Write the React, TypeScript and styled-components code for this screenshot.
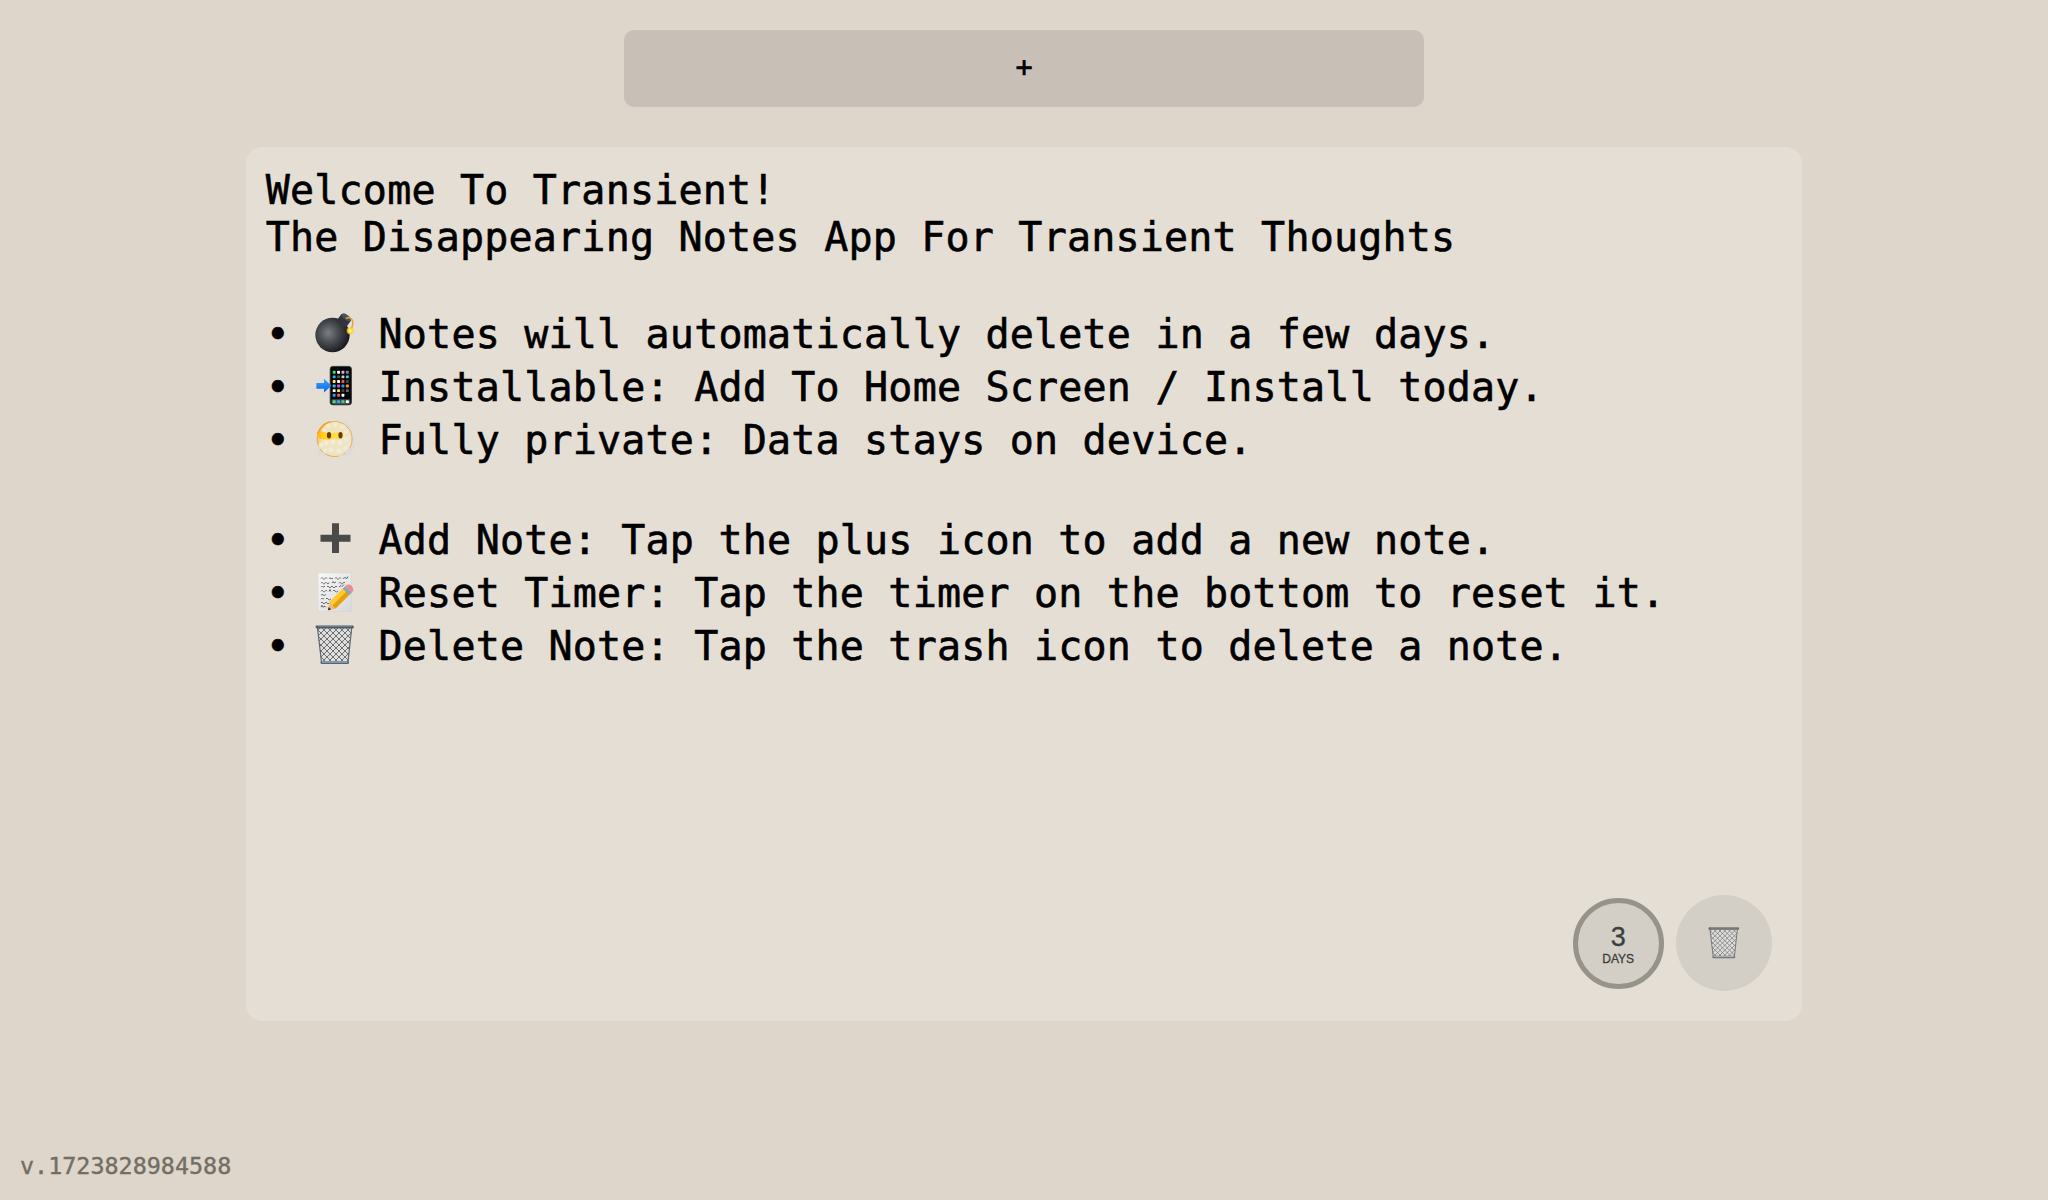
import React from "react";
import styled, { createGlobalStyle } from "styled-components";

const GlobalStyle = createGlobalStyle`
  * { box-sizing: border-box; }
  html, body { margin: 0; background: #ded6ca; }
  body { font-family: "DejaVu Sans Mono", Menlo, monospace; color: #000; }
  button { font: inherit; color: inherit; border: 0; padding: 0; margin: 0; }
`;

const Page = styled.div`
  height: 1200px;
  display: flex;
  flex-direction: column;
  align-items: center;
  padding-top: 30px;
  background: #ded6ca;
`;

const AddButton = styled.button`
  width: 800px;
  height: 77px;
  flex: none;
  border-radius: 10px;
  background: #c8c0b6;
  padding-bottom: 2px;
  font-size: 28.5px;
  line-height: 75px;
  -webkit-text-stroke: 0.6px #000;
`;

const Note = styled.section`
  width: 76%;
  height: 874px;
  flex: none;
  margin-top: 40px;
  padding: 20px 30px 30px 20px;
  border-radius: 16px;
  background: #e5ded4;
  display: flex;
  flex-direction: column;
`;

const NoteText = styled.div`
  flex: 1;
  font-size: 40px;
  letter-spacing: 0.195px;
  white-space: pre;
  -webkit-text-stroke: 0.6px #000;
`;

const Line = styled.div`
  height: 47px;
  line-height: 47px;
`;

const List = styled.ul<{ $gap: number }>`
  list-style: none;
  margin: ${(p) => p.$gap}px 0 0;
  padding: 0;
`;

const Item = styled.li`
  display: flex;
  height: 53px;
  line-height: 53px;
`;

const Bullet = styled.span`
  width: 49.2px;
`;

const Emoji = styled.svg`
  width: 40px;
  height: 40px;
  flex: none;
  margin: 5px 23.6px 0 0;
  overflow: visible;
`;

const Actions = styled.footer`
  display: flex;
  justify-content: flex-end;
  align-items: center;
  gap: 12.5px;
`;

const Timer = styled.button`
  width: 91px;
  height: 91px;
  border: 5px solid #96938b;
  border-radius: 50%;
  background: #d3cec6;
  color: #3b3e3f;
  display: flex;
  flex-direction: column;
  align-items: center;
  font-family: "Liberation Sans", Helvetica, Arial, sans-serif;
  -webkit-text-stroke: 0.3px #3b3e3f;
`;

const Count = styled.span`
  font-size: 27px;
  line-height: 30px;
  margin-top: 19px;
`;

const Unit = styled.span`
  font-size: 12px;
  line-height: 14px;
`;

const Trash = styled.button`
  width: 96px;
  height: 96px;
  border-radius: 50%;
  background: #d3cec6;
  display: flex;
  align-items: center;
  justify-content: center;
`;

const TrashIcon = styled.svg`
  width: 32px;
  height: 32px;
  margin-bottom: 1px;
  filter: grayscale(0.7);
  opacity: 0.85;
`;

const Version = styled.div`
  align-self: flex-start;
  margin: 131px 0 0 20px;
  font-size: 23.4px;
  line-height: 28px;
  color: #736e65;
  -webkit-text-stroke: 0.4px #736e65;
`;

const Bomb = () => (
  <>
    <defs>
      <radialGradient id="bomb" cx="0.38" cy="0.44" r="0.6">
        <stop offset="0" stopColor="#7c8084" />
        <stop offset="0.45" stopColor="#4b4f54" />
        <stop offset="1" stopColor="#191b20" />
      </radialGradient>
      <radialGradient id="spark">
        <stop offset="0" stopColor="#fffbd0" />
        <stop offset="0.5" stopColor="#ffdf35" />
        <stop offset="1" stopColor="#ffc928" stopOpacity="0.6" />
      </radialGradient>
    </defs>
    <circle cx="17.5" cy="22" r="17.2" fill="url(#bomb)" />
    <path d="M22 7 L26.5 1 Q32 1 36 7.5 L31 14.5 Q25 13 22 7Z" fill="#30353b" />
    <ellipse cx="31.2" cy="4.2" rx="5.2" ry="2.5" transform="rotate(38 31.2 4.2)" fill="#48515c" />
    <path d="M31 5.5 Q35.5 3.2 37.5 7.5 Q38.7 12 35.5 17" fill="none" stroke="#e0a53c" strokeWidth="1.5" />
    <circle cx="35.2" cy="17.8" r="3.7" fill="url(#spark)" />
  </>
);

const APPS = [
  ["#55dd65", "#fff", "#e5a0ef", "#858585"],
  ["#24b7f5", "#555", "#e2c6a2", "#45c7f4"],
  ["#ffe55a", "#fff", "#f45549", "#444"],
  ["#35bcec", "#df4df0", "#159df5", "#ff9417"],
  ["#fff", "#ffe26a", "#444", "#666"],
  ["#20a8f3", "#f45c50", "#fff", "#080a0c"],
];
const DOCK = ["#54df70", "#27aef5", "#42d866", "#fff"];

const Phone = () => (
  <>
    <rect x="15.2" y="0.4" width="21.2" height="38.4" rx="2.6" fill="#050607" stroke="#303438" strokeWidth="0.9" />
    {APPS.map((row, r) =>
      row.map((c, i) => <rect key={`${r}-${i}`} x={17.7 + i * 4.4} y={4.8 + r * 4.6} width="2.9" height="2.9" rx="0.7" fill={c} />)
    )}
    <rect x="16.5" y="33.2" width="18.7" height="4.7" rx="1" fill="#4a5357" />
    {DOCK.map((c, i) => (
      <rect key={i} x={17.7 + i * 4.4} y="34.2" width="2.9" height="2.9" rx="0.7" fill={c} />
    ))}
    <defs>
      <linearGradient id="arrow" x1="0" y1="0" x2="0" y2="1">
        <stop offset="0" stopColor="#38a5ff" />
        <stop offset="1" stopColor="#0865e8" />
      </linearGradient>
    </defs>
    <path d="M1.4 17 H9 V12.8 L16.4 19.7 L9 26.5 V22.7 H1.4Z" fill="url(#arrow)" />
  </>
);

const CLOUD = [
  [7, 17, 4], [12, 25, 4.5], [7, 27, 3.5], [19, 24, 4.5], [26, 25, 4.7], [32, 21, 4.3], [17, 32, 4.5],
  [25, 33, 4.5], [31, 30, 4], [11, 32, 3], [14, 8, 3.8], [21, 7, 4], [28, 9, 3.7], [32, 14, 3.4], [10, 12, 3.2],
];

const CloudFace = () => (
  <>
    <defs>
      <linearGradient id="face" x1="0" x2="1" y1="0.3" y2="0.6">
        <stop offset="0" stopColor="#f5ad43" />
        <stop offset="0.2" stopColor="#f4e3a4" />
        <stop offset="1" stopColor="#f0e9d2" />
      </linearGradient>
      <radialGradient id="puff" cx="0.4" cy="0.35">
        <stop offset="0" stopColor="#f6f1dc" />
        <stop offset="1" stopColor="#ebe2c6" stopOpacity="0.7" />
      </radialGradient>
      <linearGradient id="band" x1="0" x2="1">
        <stop offset="0" stopColor="#ffb914" />
        <stop offset="0.3" stopColor="#ffd51e" />
        <stop offset="0.75" stopColor="#ffe246" />
        <stop offset="1" stopColor="#f7eab0" />
      </linearGradient>
    </defs>
    <path d="M29 3 Q38 5 37 16 Q41 24 38 31 Q36 38 28 37 Q15 40 6 36 Q3 36 3 31Z" fill="#d8dade" opacity="0.8" />
    <circle cx="19.6" cy="20" r="17.5" fill="url(#face)" stroke="#ebab4c" strokeWidth="1" />
    {CLOUD.map(([x, y, r], i) => (
      <circle key={i} cx={x - 0.2} cy={y} r={r} fill="url(#puff)" />
    ))}
    <path d="M2.6 13 Q5 11 8 13 Q14 15 20 14 Q26 12 30 14 Q31 17 27 19 Q24 22 20 19 Q14 22 10 20 Q5 21 2.6 18Z" fill="url(#band)" />
    <path d="M2.6 15 Q6 5 15 2.8" fill="none" stroke="#f2a02e" strokeWidth="1.6" />
    <ellipse cx="14" cy="16.2" rx="2.1" ry="3.3" fill="#6b3c08" />
    <ellipse cx="25.5" cy="16.2" rx="2.1" ry="3.3" fill="#6b3c08" />
  </>
);

const Plus = () => <path d="M17 4.3 h7 v11.4 h11.5 v7 h-11.5 v11.4 h-7 v-11.4 h-11.5 v-7 h11.5z" fill="#4a4a4a" />;

const Memo = () => (
  <>
    <defs>
      <linearGradient id="paper" x1="0" y1="0" x2="1" y2="1">
        <stop offset="0" stopColor="#f8f8f8" />
        <stop offset="1" stopColor="#d9d9d9" />
      </linearGradient>
    </defs>
    <rect x="3" y="0.9" width="33.4" height="38.4" fill="url(#paper)" stroke="#d5d5d3" strokeWidth="0.6" />
    <g fill="none" stroke="#555" strokeWidth="0.85">
      <path d="M6 6.5 q1-2 2 0 t2 0 l1-1 1 1 M14 6.5 q1-1 2 0 t2-.5 M20 6.5 q1-2 2 0 t2 0 2 0 M28 6.5 l2-1 2 1 1-2" />
      <path d="M6 11.2 q1-2 2 0 t2 0 2 0 2-.7 M17 11 l1-1.5 1 1.5 2-1 M24 11.2 q1-2 2 0 t2 0 2-.5" />
      <path d="M6 15.2 l1-1 1 1 2-1 M12 15 q1-2 2 0 t2 0 2 0 2 0 2 0 M24 15 l2-1.5 1 1 2-2" />
      <path d="M6 19.2 q1-2 2 0 t2 0 2 0 M14 19.5 l1-2 1 2 M18 19 q1-2 2 0 t3 0" />
      <path d="M6 23 q1-1 2 0 t3-.5 M6 27.2 l1-1 1 1 1-1 M11 27 q1-2 2 0 t3 0" />
      <path d="M6 31 q1-2 2 0 t2 0 2 0 2 0 M6 35.2 l1-2 1 2 2-1 1 1" />
    </g>
    <path d="M13 38.3 L14.4 30.4 L20.4 36.7Z" fill="#e4bc83" />
    <path d="M13 38.3 L13.7 35.1 L16.1 37.4Z" fill="#24221f" />
    <path d="M14.4 30.4 L28.4 16.1 L34.8 22.5 L20.4 36.7Z" fill="#e79f0c" />
    <path d="M14.4 30.4 L28.4 16.1 L31.6 19.3 L17.4 33.5Z" fill="#ffcb2e" />
    <path d="M27.7 16.7 L30.4 14 L36.9 20.4 L34.2 23.1Z" fill="#8ba6b7" />
    <path d="M30.4 14 L31.8 12.7 Q37.6 11.4 38.4 18.3 L36.9 20.4Z" fill="#ed8b93" />
  </>
);

const meshLines = () => {
  const lines: string[] = [];
  for (let i = -36; i < 64; i += 6) {
    lines.push(`M${i} 2 l36 36`, `M${i} 38 l36 -36`);
  }
  return lines.join(" ");
};
const MESH = meshLines();

const Basket = ({ id }: { id: string }) => (
  <>
    <defs>
      <clipPath id={id}>
        <path d="M2.5 3 H36.7 L33 37 H6.5Z" />
      </clipPath>
    </defs>
    <path d="M2.5 3 H36.7 L33 37 H6.5Z" fill="#e2dfd8" />
    <path d={MESH} clipPath={`url(#${id})`} stroke="#69727b" strokeWidth="1" fill="none" />
    <path d="M2.5 3 L6.5 37 M36.7 3 L33 37" stroke="#5c6670" strokeWidth="1.2" />
    <rect x="0.6" y="0.4" width="38.2" height="3" rx="1.3" fill="#4c5967" />
    <path d="M3 1.2 H37" stroke="#91a2b3" strokeWidth="0.7" />
    <rect x="5.5" y="36" width="28.5" height="3" rx="1.2" fill="#566575" />
    <path d="M7 37 H32.5" stroke="#abc2d7" strokeWidth="1.1" />
  </>
);

const FEATURES = [
  { icon: <Bomb />, text: "Notes will automatically delete in a few days." },
  { icon: <Phone />, text: "Installable: Add To Home Screen / Install today." },
  { icon: <CloudFace />, text: "Fully private: Data stays on device." },
];

const HELP = [
  { icon: <Plus />, text: "Add Note: Tap the plus icon to add a new note." },
  { icon: <Memo />, text: "Reset Timer: Tap the timer on the bottom to reset it." },
  { icon: <Basket id="basket-note" />, text: "Delete Note: Tap the trash icon to delete a note." },
];

export default function App() {
  return (
    <>
      <GlobalStyle />
      <Page>
        <AddButton>+</AddButton>
        <Note>
          <NoteText>
            <Line>Welcome To Transient!</Line>
            <Line>The Disappearing Notes App For Transient Thoughts</Line>
            {[FEATURES, HELP].map((items, n) => (
              <List key={n} $gap={47}>
                {items.map((f) => (
                  <Item key={f.text}>
                    <Bullet>•</Bullet>
                    <Emoji viewBox="0 0 40 40">{f.icon}</Emoji>
                    {f.text}
                  </Item>
                ))}
              </List>
            ))}
          </NoteText>
          <Actions>
            <Timer>
              <Count>3</Count>
              <Unit>DAYS</Unit>
            </Timer>
            <Trash aria-label="Delete note">
              <TrashIcon viewBox="0 0 40 40">
                <Basket id="basket-button" />
              </TrashIcon>
            </Trash>
          </Actions>
        </Note>
        <Version>v.1723828984588</Version>
      </Page>
    </>
  );
}
